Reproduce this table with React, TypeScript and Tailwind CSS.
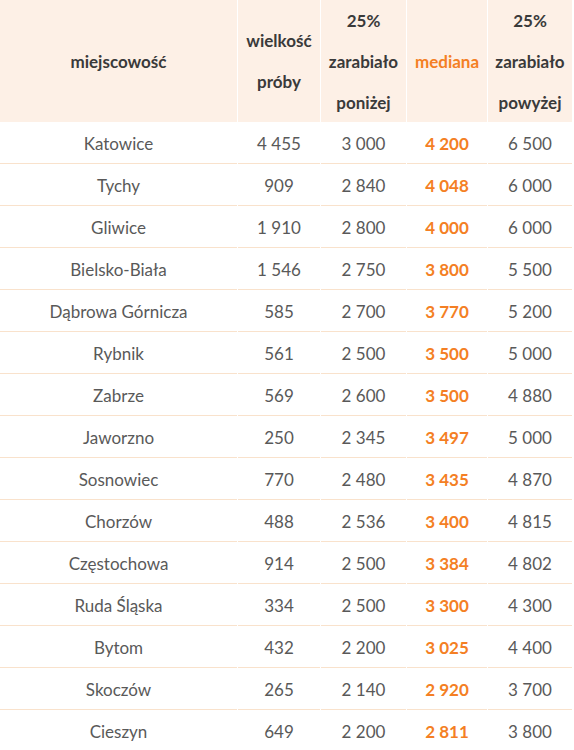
import React from "react";

const rows: [string, string, string, string, string][] = [
  ["Katowice", "4 455", "3 000", "4 200", "6 500"],
  ["Tychy", "909", "2 840", "4 048", "6 000"],
  ["Gliwice", "1 910", "2 800", "4 000", "6 000"],
  ["Bielsko-Biała", "1 546", "2 750", "3 800", "5 500"],
  ["Dąbrowa Górnicza", "585", "2 700", "3 770", "5 200"],
  ["Rybnik", "561", "2 500", "3 500", "5 000"],
  ["Zabrze", "569", "2 600", "3 500", "4 880"],
  ["Jaworzno", "250", "2 345", "3 497", "5 000"],
  ["Sosnowiec", "770", "2 480", "3 435", "4 870"],
  ["Chorzów", "488", "2 536", "3 400", "4 815"],
  ["Częstochowa", "914", "2 500", "3 384", "4 802"],
  ["Ruda Śląska", "334", "2 500", "3 300", "4 300"],
  ["Bytom", "432", "2 200", "3 025", "4 400"],
  ["Skoczów", "265", "2 140", "2 920", "3 700"],
  ["Cieszyn", "649", "2 200", "2 811", "3 800"],
];

const head = "bg-[#fdf0e6] h-[122px] flex flex-col items-center justify-center text-center font-bold text-[17px] leading-[41px] text-[#3a3a3a] whitespace-nowrap";
const cell = "h-[42px] pt-[2px] flex items-center justify-center border-b border-[#f9e2cc] text-[17px] text-[#595959] whitespace-nowrap";

export default function App() {
  return (
    <div className="w-[574px] h-[750px] overflow-hidden bg-white" style={{ fontFamily: "Lato, 'Open Sans', sans-serif" }}>
      <div className="grid grid-cols-[237px_82px_85px_80px_84px] gap-x-px w-[572px]">
        <div className={head}>miejscowość</div>
        <div className={head}>
          <span>wielkość</span>
          <span>próby</span>
        </div>
        <div className={head}>
          <span>25%</span>
          <span>zarabiało</span>
          <span>poniżej</span>
        </div>
        <div className={head + " !text-[#f47f24]"}>mediana</div>
        <div className={head}>
          <span>25%</span>
          <span>zarabiało</span>
          <span>powyżej</span>
        </div>
        {rows.map((r) => (
          <React.Fragment key={r[0]}>
            <div className={cell}>{r[0]}</div>
            <div className={cell}>{r[1]}</div>
            <div className={cell}>{r[2]}</div>
            <div className={cell + " font-bold !text-[#f47f24]"}>{r[3]}</div>
            <div className={cell}>{r[4]}</div>
          </React.Fragment>
        ))}
      </div>
    </div>
  );
}
